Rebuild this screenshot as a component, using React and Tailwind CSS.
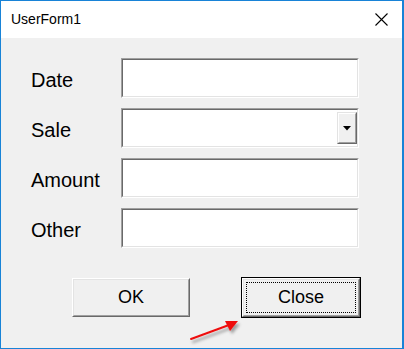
import React from 'react';

const font = { fontFamily: '"Liberation Sans", Arial, sans-serif' };

const Field = ({ combo }) => (
  <div className="w-[238px] h-[40px] border-t border-l border-[#a0a0a0] border-b border-r border-b-white border-r-white">
    <div className="w-full h-full border-t border-l border-[#696969] border-b border-r border-b-[#e3e3e3] border-r-[#e3e3e3] bg-white flex justify-end items-center pr-0">
      {combo && (
        <div className="w-[20px] h-[32px] bg-[#f0f0f0] border-t border-l border-[#e3e3e3] border-b border-r border-b-[#696969] border-r-[#696969] flex items-center justify-center">
          <div className="w-full h-full border-t border-l border-white border-b border-r border-b-[#a0a0a0] border-r-[#a0a0a0] flex items-center justify-center">
            <svg width="8" height="5" viewBox="0 0 8 5">
              <path d="M0 0H8L4 4.5Z" fill="#000" />
            </svg>
          </div>
        </div>
      )}
    </div>
  </div>
);

const Raised = ({ children, className = '' }) => (
  <div className={`h-full w-full border-t border-l border-white border-b border-r border-b-[#696969] border-r-[#696969] bg-[#f0f0f0] ${className}`}>
    <div className="h-full w-full border-t border-l border-[#e3e3e3] border-b border-r border-b-[#a0a0a0] border-r-[#a0a0a0] flex items-center justify-center">
      {children}
    </div>
  </div>
);

export default function App() {
  const rows = [
    { label: 'Date' },
    { label: 'Sale', combo: true },
    { label: 'Amount' },
    { label: 'Other' },
  ];

  return (
    <div className="relative w-[404px] h-[349px] bg-white" style={font}>
      <div className="w-full h-full flex flex-col border-t border-l border-b border-r-2 border-[#1883d7] bg-[#f0f0f0]">
        {/* Title bar */}
        <div className="h-[37px] bg-white flex items-center justify-between pl-[10px] pr-[14px] shrink-0">
          <span className="text-[14px] text-black">UserForm1</span>
          <svg width="13" height="13" viewBox="0 0 13 13">
            <path d="M0.5 0.5L12.5 12.5M12.5 0.5L0.5 12.5" stroke="#000" strokeWidth="1.1" />
          </svg>
        </div>

        {/* Body */}
        <div className="flex flex-col pt-[20px] pl-[30px] gap-[10px]">
          {rows.map((r) => (
            <div key={r.label} className="flex items-center h-[40px]">
              <span className="w-[90px] text-[20px] text-black pt-[3px]">{r.label}</span>
              <Field combo={r.combo} />
            </div>
          ))}
        </div>

        <div className="flex items-start pl-[71px] pt-[29px]">
          <div className="w-[118px] h-[39px] mt-[1px]">
            <Raised>
              <span className="text-[18px] text-black">OK</span>
            </Raised>
          </div>
          <div className="w-[120px] h-[41px] ml-[51px] border border-black">
            <Raised>
              <div className="w-[110px] h-[31px] border border-dotted border-black flex items-center justify-center">
                <span className="text-[18px] text-black">Close</span>
              </div>
            </Raised>
          </div>
        </div>
      </div>

      {/* red arrow annotation */}
      <svg className="absolute left-[185px] top-[312px]" width="62" height="36" viewBox="0 0 62 36">
        <defs>
          <filter id="sh" x="-20%" y="-40%" width="150%" height="200%">
            <feDropShadow dx="2" dy="3" stdDeviation="1.5" floodColor="#000" floodOpacity="0.35" />
          </filter>
        </defs>
        <g filter="url(#sh)">
          <path d="M6 27L44 13" stroke="#ee1111" strokeWidth="2" strokeLinecap="round" />
          <path d="M53 9L40 9L45 19Z" fill="#ee1111" />
        </g>
      </svg>
    </div>
  );
}
